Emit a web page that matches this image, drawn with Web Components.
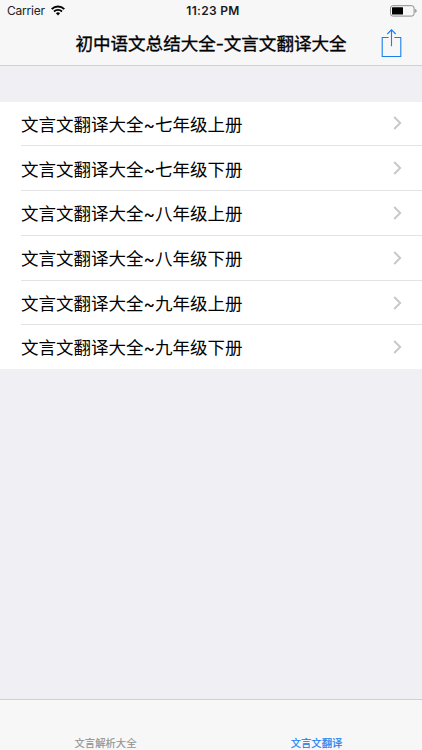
<!DOCTYPE html>
<html lang="zh-CN">
<head>
<meta charset="utf-8">
<meta name="viewport" content="width=device-width, initial-scale=1">
<title>初中语文总结大全</title>
<style>
	html,
	body {
		height: 100%;
		margin: 0;
	}
	body {
		font-family: Inter, "Noto Sans CJK SC", sans-serif;
		color: #000;
		overflow: hidden;
	}
</style>
</head>
<body>
<app-screen>
	<status-bar slot="header" carrier="Carrier" time="11:23 PM"></status-bar>
	<nav-bar slot="header">初中语文总结大全-文言文翻译大全</nav-bar>
	<list-view>
		<list-row>文言文翻译大全~七年级上册</list-row>
		<list-row>文言文翻译大全~七年级下册</list-row>
		<list-row>文言文翻译大全~八年级上册</list-row>
		<list-row>文言文翻译大全~八年级下册</list-row>
		<list-row>文言文翻译大全~九年级上册</list-row>
		<list-row>文言文翻译大全~九年级下册</list-row>
	</list-view>
	<tab-bar slot="footer">
		<tab-item>文言解析大全</tab-item>
		<tab-item active>文言文翻译</tab-item>
	</tab-bar>
</app-screen>

<script>
/**
 * Base class: puts the rendered markup in an open shadow root.
 */
class BaseElement extends HTMLElement {
	connectedCallback() {
		if ( this.shadowRoot ) {
			return;
		}
		const template = document.createElement( 'template' );
		template.innerHTML = `<style>${ this.renderStyle() }</style>${ this.render() }`;
		this.attachShadow( { mode: 'open' } );
		this.shadowRoot.appendChild( template.content.cloneNode( true ) );
	}

	render() {
		return '<slot></slot>';
	}
}

class AppScreen extends BaseElement {
	renderStyle() {
		return `
			:host {
				display: flex;
				flex-direction: column;
				height: 100%;
				background: #efeff4;
			}
			header {
				box-sizing: border-box;
				height: 66px;
				background: #f7f7f8;
				border-bottom: 1px solid #cfcfd4;
			}
			main {
				flex: 1;
				padding-top: 35.5px;
			}
		`;
	}

	render() {
		return `
			<header><slot name="header"></slot></header>
			<main><slot></slot></main>
			<slot name="footer"></slot>
		`;
	}
}

class StatusBar extends BaseElement {
	renderStyle() {
		return `
			:host {
				display: grid;
				grid-template-columns: 1fr auto 1fr;
				align-items: center;
				height: 21px;
				padding: 0 5px 0 7px;
				font-size: 12px;
				line-height: 21px;
			}
			.carrier {
				display: flex;
				align-items: center;
				gap: 6px;
				color: #222;
				letter-spacing: -0.2px;
			}
			.time {
				padding-left: 2px;
				font-weight: 600;
				color: #1a1a1a;
				letter-spacing: 0.3px;
			}
			.battery {
				justify-self: end;
			}
			svg {
				display: block;
			}
		`;
	}

	render() {
		return `
			<span class="carrier">
				<span>${ this.getAttribute( 'carrier' ) }</span>
				<svg width="14" height="11" viewBox="0 0 14 11" fill="none" stroke="#000">
					<path d="M.7 4.1a8.9 8.9 0 0 1 12.6 0" stroke-width="1.9"/>
					<path d="M3 6.5a5.7 5.7 0 0 1 8 0" stroke-width="1.8"/>
					<path d="M4.9 8.3a3 3 0 0 1 4.2 0L7 10.5z" fill="#000" stroke="none"/>
				</svg>
			</span>
			<span class="time">${ this.getAttribute( 'time' ) }</span>
			<svg class="battery" width="27" height="12" viewBox="0 0 27 12">
				<rect x=".5" y=".7" width="23.6" height="10.4" rx="2.4" fill="none" stroke="#8c8c8e"/>
				<rect x="2" y="2.2" width="11" height="7.4" rx=".5"/>
				<path d="M25.2 4v3.8c1.9-.7 1.9-3.1 0-3.8z" fill="#8c8c8e"/>
			</svg>
		`;
	}
}

class NavBar extends BaseElement {
	renderStyle() {
		return `
			:host {
				display: grid;
				grid-template-columns: 46px 1fr 46px;
				align-items: start;
				height: 44px;
			}
			h1 {
				margin: 0;
				padding-top: 1px;
				font-size: 17.55px;
				font-weight: 400;
				line-height: 43px;
				text-align: center;
				white-space: nowrap;
				-webkit-text-stroke: 0.35px;
			}
			svg {
				display: block;
				margin: 8px 0 0 5px;
			}
		`;
	}

	render() {
		return `
			<span></span>
			<h1><slot></slot></h1>
			<svg width="21" height="28" viewBox="0 0 21 28" fill="none" stroke="#1a7fee" stroke-width="1.1">
				<path d="M7.6 8.5H1.2v19h18.6v-19h-6.4"/>
				<path d="M10.5 17.3V.9M6.3 5l4.2-4.2L14.7 5"/>
			</svg>
		`;
	}
}

class ListView extends BaseElement {
	renderStyle() {
		return `
			:host {
				display: block;
				background: #fff;
			}
		`;
	}
}

class ListRow extends BaseElement {
	renderStyle() {
		return `
			:host {
				display: block;
				padding-left: 21px;
			}
			.row {
				box-sizing: border-box;
				display: flex;
				align-items: center;
				justify-content: space-between;
				height: 44.8px;
				padding-right: 20px;
				border-bottom: 1px solid #e3e3e6;
				font-size: 17.5px;
			}
			:host( :last-child ) .row {
				height: 44px;
				border-bottom-color: transparent;
			}
			svg {
				display: block;
			}
		`;
	}

	render() {
		return `
			<div class="row">
				<span><slot></slot></span>
				<svg width="9" height="14" viewBox="0 0 9 14" fill="none" stroke="#c7c7cc" stroke-width="1.9">
					<path d="M1.2 1l6 6-6 6"/>
				</svg>
			</div>
		`;
	}
}

class TabBar extends BaseElement {
	renderStyle() {
		return `
			:host {
				box-sizing: border-box;
				display: flex;
				height: 51px;
				background: #f7f7f8;
				border-top: 1px solid #cfcfd4;
			}
		`;
	}
}

class TabItem extends BaseElement {
	renderStyle() {
		return `
			:host {
				flex: 1;
				display: flex;
				align-items: flex-end;
				justify-content: center;
				font-size: 10.35px;
				line-height: 13px;
				color: #929292;
				-webkit-text-stroke: 0.15px;
			}
			:host( [active] ) {
				color: #1a7fee;
				-webkit-text-stroke: 0.2px;
			}
		`;
	}
}

customElements.define( 'app-screen', AppScreen );
customElements.define( 'status-bar', StatusBar );
customElements.define( 'nav-bar', NavBar );
customElements.define( 'list-view', ListView );
customElements.define( 'list-row', ListRow );
customElements.define( 'tab-bar', TabBar );
customElements.define( 'tab-item', TabItem );
</script>
</body>
</html>
